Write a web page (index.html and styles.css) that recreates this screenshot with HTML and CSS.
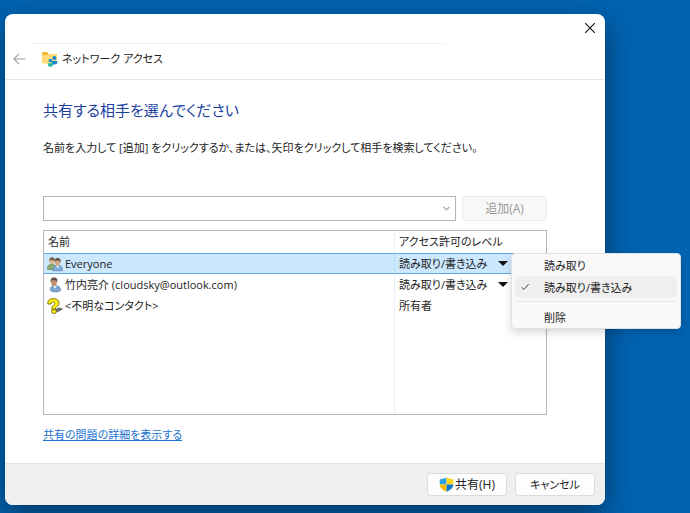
FILE: index.html
```html
<!DOCTYPE html>
<html lang="ja">
<head>
    <meta charset="UTF-8">
    <meta name="viewport" content="width=device-width, initial-scale=1.0">
    <title>ネットワーク アクセス</title>
    <link rel="stylesheet" href="styles.css">
</head>
<body>
    <div class="window">
        <div class="titlebar">
            <button class="close" type="button" aria-label="閉じる">
                <svg width="10" height="10" viewBox="0 0 10 10"><path d="M0 0L10 10M10 0L0 10" stroke="#111" stroke-width="1.1"/></svg>
            </button>
        </div>

        <div class="header">
            <button class="back" type="button" aria-label="戻る">
                <svg width="13" height="12" viewBox="0 0 13 12"><path d="M6 .8L.9 6L6 11.2M.9 6H12.6" fill="none" stroke="#a0a0a0" stroke-width="1.2"/></svg>
            </button>
            <svg width="17" height="17" viewBox="0 0 17 17">
                <path d="M1 3a1 1 0 0 1 1-1h4l2 2h7a1 1 0 0 1 1 1v3H1z" fill="#f2b632"/>
                <path d="M1 5h5.5L8 4h7a1 1 0 0 1 1 1v7.500a1 1 0 0 1-1 1H2a1 1 0 0 1-1-1z" fill="#ffdc79"/>
                <circle cx="13.400" cy="7.900" r="2" fill="#1585d0"/>
                <path d="M10.800 11h5.500c.5 2.400-.7 3.600-2.800 3.600s-3.200-1.200-2.700-3.600z" fill="#1585d0"/>
                <circle cx="9.400" cy="10.600" r="1.900" fill="#1f93c4"/>
                <path d="M6.800 13.200h5.400c.5 2.300-.7 3.500-2.700 3.500s-3.200-1.200-2.700-3.500z" fill="#28b9a8"/>
            </svg>
            <span class="caption">ネットワーク アクセス</span>
        </div>

        <div class="content">
            <h1>共有する相手を選んでください</h1>
            <p>名前を入力して [追加] をクリックするか、または、矢印をクリックして相手を検索してください。</p>

            <div class="add-row">
                <div class="combo">
                    <input type="text" aria-label="名前">
                    <button type="button" aria-label="一覧を開く">
                        <svg width="7" height="5" viewBox="0 0 7 5"><path d="M.5 .8L3.500 3.800L6.500 .8" fill="none" stroke="#999" stroke-width="1.100"/></svg>
                    </button>
                </div>
                <button class="btn add" type="button" disabled>追加(A)</button>
            </div>

            <div class="list">
                <table>
                    <thead>
                        <tr><th>名前</th><th class="col-level">アクセス許可のレベル</th></tr>
                    </thead>
                    <tbody>
                        <tr class="selected">
                            <td>
                                <div class="name">
                                    <svg width="16" height="16" viewBox="0 0 16 16">
                                        <path d="M.5 13.500C.3 10 1.500 8.500 4.500 8.200S9 10 9 13.500z" fill="#86ad68" stroke="#55784a" stroke-width=".6"/>
                                        <ellipse cx="5" cy="5" rx="2.500" ry="3.200" fill="#d8b58c"/>
                                        <path d="M2.300 6C1.700 3 3 1.200 5 1.200s3.500 1.500 2.900 3.600C6 4.800 3.800 4 3.300 3.800z" fill="#76604b"/>
                                        <path d="M5.800 14.800c-.2-3.500 1-5.200 4.700-5.400s5.300 1.900 5.100 5.400z" fill="#7fabd6" stroke="#527da5" stroke-width=".6"/>
                                        <path d="M9 9.500l1.700 2.700 1.600-2.700z" fill="#edf5fb"/>
                                        <ellipse cx="10.700" cy="6.200" rx="2.600" ry="3.400" fill="#d6a77d"/>
                                        <path d="M8 6.500C7.300 3.500 8.700 2 10.700 2s3.500 1.500 2.800 4.500L12.700 4.700 9 4.500z" fill="#5f4b3c"/>
                                    </svg>
                                    Everyone
                                </div>
                            </td>
                            <td>
                                <div class="level">
                                    <button class="drop" type="button" aria-haspopup="menu" aria-expanded="true">読み取り/書き込み <i class="arrow"></i></button>
                                    <div class="menu" role="menu">
                                        <button type="button" role="menuitem">読み取り</button>
                                        <button class="checked" type="button" role="menuitem">
                                            <svg width="8" height="8" viewBox="0 0 8 8"><path d="M.5 4.200L2.900 6.500L7.600 1.200" fill="none" stroke="#444"/></svg>
                                            読み取り/書き込み
                                        </button>
                                        <hr>
                                        <button type="button" role="menuitem">削除</button>
                                    </div>
                                </div>
                            </td>
                        </tr>
                        <tr>
                            <td>
                                <div class="name">
                                    <svg width="16" height="16" viewBox="0 0 16 16">
                                        <path d="M3.500 13.500C2.800 10.500 4.500 8.500 8 8.300s5.800 2 5.700 5.200c-1.800 1.900-8.200 2.100-10.200 0z" fill="#7fa6cf" stroke="#5c7fa3" stroke-width=".6"/>
                                        <path d="M6 8.800l2 3 2-3z" fill="#eef5fb"/>
                                        <ellipse cx="7" cy="5" rx="2.900" ry="4" fill="#c4906d"/>
                                        <path d="M3.900 5.500C3 2.200 4.500.5 7 .5s4.200 1.700 3.100 5L9 3.400 5.300 3z" fill="#665248"/>
                                    </svg>
                                    竹内亮介 (cloudsky@outlook.com)
                                </div>
                            </td>
                            <td>
                                <div class="level">
                                    <button class="drop" type="button" aria-haspopup="menu">読み取り/書き込み <i class="arrow"></i></button>
                                </div>
                            </td>
                        </tr>
                        <tr>
                            <td>
                                <div class="name">
                                    <svg width="16" height="16" viewBox="0 0 16 16">
                                        <path d="M7.500 12l4-2.500 4 .8-.2 1.500L9.500 14.500z" fill="#6b6b6b"/>
                                        <path d="M.8 6C.5 2.500 2.800.6 6.200.6c3.600 0 5.900 1.700 5.900 4.500 0 2.700-2.600 3.200-3.500 4.400v1.400l-3.800.5C4.200 7.800 7.600 7.300 7.800 5.300c.1-1-.7-1.500-1.700-1.400-1.100 0-1.700.8-1.700 2z" fill="#fff01a" stroke="#6f6900" stroke-width=".9"/>
                                        <ellipse cx="7" cy="13.500" rx="2.400" ry="2" fill="#fff01a" stroke="#6f6900" stroke-width=".9"/>
                                    </svg>
                                    &lt;不明なコンタクト&gt;
                                </div>
                            </td>
                            <td><div class="level">所有者</div></td>
                        </tr>
                        <tr class="rest"><td></td><td></td></tr>
                    </tbody>
                </table>
            </div>

            <a class="help" href="#">共有の問題の詳細を表示する</a>
        </div>

        <div class="footer">
            <button class="btn share" type="button">
                <svg width="15" height="15" viewBox="0 0 15 15">
                    <path d="M7.500.5C5.500 1.800 3 2.200.7 2.200V7.500h6.800z" fill="#2ba3e3"/>
                    <path d="M7.500.5c2 1.300 4.500 1.700 6.800 1.700V7.500H7.500z" fill="#ffd21c"/>
                    <path d="M.7 7.500c.2 3.500 3.300 5.800 6.800 7.200V7.500z" fill="#f9bd08"/>
                    <path d="M14.300 7.500c-.2 3.500-3.300 5.800-6.800 7.200V7.500z" fill="#1278cc"/>
                </svg>
                共有(H)
            </button>
            <button class="btn" type="button">キャンセル</button>
        </div>
    </div>
</body>
</html>
```

FILE: styles.css
```css
* {
    box-sizing: border-box;
}
body {
    display: flex;
    margin: 0;
    min-height: 100vh;
    padding: 14px 85px 8px 5px;
    background: #0063b1;
    color: #222;
    font-family: "Open Sans", "Noto Sans CJK JP", sans-serif;
    font-size: 11px;
    line-height: 20px;
    font-feature-settings: "palt";
}
button, input {
    font: inherit;
    font-feature-settings: inherit;
    color: inherit;
}
button {
    padding: 0;
    border: none;
    background: none;
    white-space: nowrap;
}
svg {
    display: block;
    flex: none;
}
.window {
    display: flex;
    flex-direction: column;
    flex: 1;
    min-width: 0;
    background: white;
    border-radius: 8px;
    box-shadow: 0 10px 30px rgba(0,0,0,0.45);
}
.titlebar {
    display: flex;
    justify-content: flex-end;
    height: 30px;
    margin: 0 159px 0 27px;
    border-bottom: 1px solid #eef3f8;
}
.close {
    display: grid;
    place-items: center;
    flex: none;
    width: 30px;
    height: 28px;
    margin-right: -159px;
}
.header {
    display: flex;
    align-items: center;
    height: 36px;
    padding: 0 8px 6px;
    border-bottom: 1px solid #e9e9e9;
}
.back {
    margin-right: 15px;
}
.caption {
    margin-left: 4px;
}
.content {
    display: flex;
    flex-direction: column;
    flex: 1;
    padding: 18px 58px 18px 38px;
}
h1 {
    margin: 0;
    color: #1a3f9e;
    font-size: 15px;
    font-weight: normal;
    line-height: 24px;
}
p {
    margin: 16px 0 38px;
}
.add-row {
    display: flex;
    gap: 6px;
    margin-bottom: 9px;
}
.combo {
    display: flex;
    flex: 1;
    border: 1px solid #b5b5b9;
}
.combo input {
    flex: 1;
    min-width: 0;
    border: none;
    outline: none;
    background: none;
}
.combo button {
    display: grid;
    place-items: center;
    width: 17px;
}
.btn {
    display: flex;
    align-items: center;
    justify-content: center;
    width: 80px;
    height: 23px;
    background: #fdfdfd;
    border: 1px solid #dcdcdc;
    border-radius: 3px;
}
.add {
    width: 85px;
    height: 25px;
    background: #f8f8f8;
    border-color: #ececec;
    color: #999;
}
.add, .share {
    font-size: 12px;
}
.share {
    gap: 1px;
}
.list {
    display: grid;
    flex: 1;
    border: 1px solid #b5b5bd;
}
table {
    width: 100%;
    height: 100%;
    table-layout: fixed;
    border-spacing: 0;
}
th, td {
    height: 21px;
    padding: 0 0 0 4px;
    font-weight: normal;
    text-align: left;
    white-space: nowrap;
}
th {
    height: 22px;
}
.col-level {
    width: 152px;
}
th + th, td + td {
    border-left: 1px solid #eaf0f6;
}
td:first-child {
    padding-left: 3px;
}
.selected td {
    background: #cce8ff;
    border-top: 1px solid #5da9e6;
    border-bottom: 1px solid #5da9e6;
}
.selected td + td {
    border-left-color: #b8dbf5;
}
.rest td {
    height: auto;
}
.name {
    display: flex;
    align-items: center;
    gap: 2px;
    height: 19px;
}
.level {
    position: relative;
    width: 112px;
    height: 19px;
    line-height: 19px;
}
.drop {
    display: flex;
    align-items: center;
    justify-content: space-between;
    width: 109px;
    height: 19px;
}
.arrow {
    border: 5px solid transparent;
    border-top-color: #111;
    border-bottom-width: 0;
}
.menu {
    position: absolute;
    top: -1px;
    left: 100%;
    width: 170px;
    padding: 0 3px;
    background: #f9f9f9;
    border: 1px solid #e2e2e2;
    border-radius: 4px;
    box-shadow: 0 4px 8px rgba(0,0,0,0.15);
}
.menu button {
    display: flex;
    align-items: center;
    width: 100%;
    height: 22px;
    padding-left: 29px;
    border-radius: 3px;
}
.menu .checked {
    gap: 15px;
    padding-left: 6px;
    background: #efefef;
}
.menu hr {
    height: 1px;
    margin: 3px 2px 4px;
    border: none;
    background: #e2e2e2;
}
.help {
    align-self: flex-start;
    margin-top: 10px;
    color: #1b73d0;
}
.footer {
    display: flex;
    align-items: center;
    justify-content: flex-end;
    gap: 8px;
    height: 42px;
    padding: 0 10px;
    background: #efefef;
    border-top: 1px solid #e2e2e2;
    border-radius: 0 0 8px 8px;
}
```
